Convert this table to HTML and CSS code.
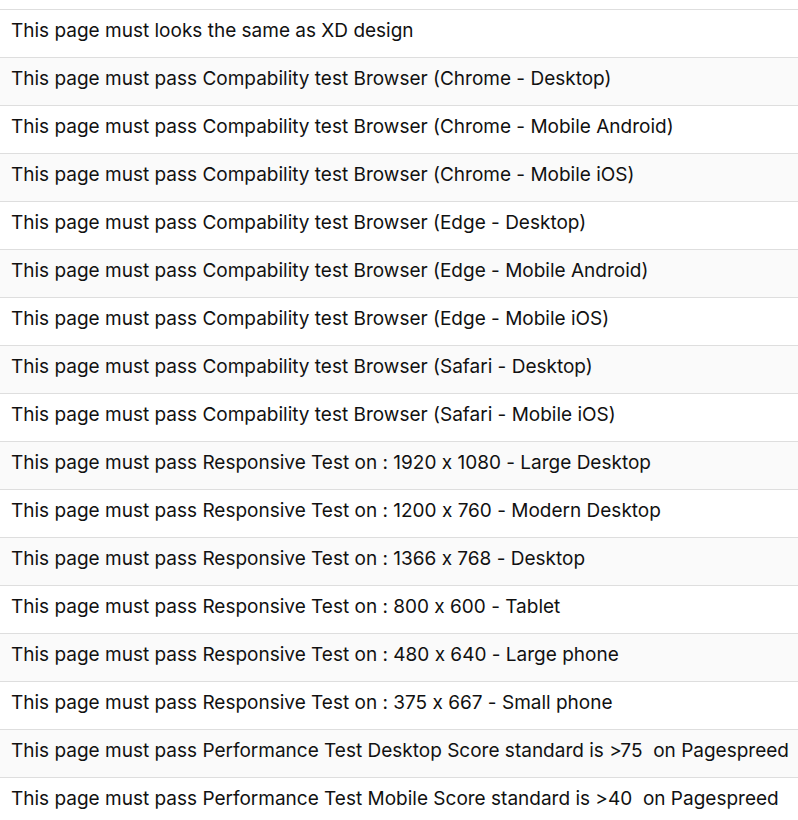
FILE: index.html
```html
<!DOCTYPE html>
<html lang="en">
<head>
  <meta charset="UTF-8">
  <meta name="viewport" content="width=device-width, initial-scale=1.0">
  <title>Checklist</title>
  <link rel="stylesheet" href="styles.css">
</head>
<body>
  <table class="checklist">
    <tbody>
      <tr><td>This page must looks the same as XD design</td></tr>
      <tr><td>This page must pass Compability test Browser (Chrome - Desktop)</td></tr>
      <tr><td>This page must pass Compability test Browser (Chrome - Mobile Android)</td></tr>
      <tr><td>This page must pass Compability test Browser (Chrome - Mobile iOS)</td></tr>
      <tr><td>This page must pass Compability test Browser (Edge - Desktop)</td></tr>
      <tr><td>This page must pass Compability test Browser (Edge - Mobile Android)</td></tr>
      <tr><td>This page must pass Compability test Browser (Edge - Mobile iOS)</td></tr>
      <tr><td>This page must pass Compability test Browser (Safari - Desktop)</td></tr>
      <tr><td>This page must pass Compability test Browser (Safari - Mobile iOS)</td></tr>
      <tr><td>This page must pass Responsive Test on : 1920 x 1080 - Large Desktop</td></tr>
      <tr><td>This page must pass Responsive Test on : 1200 x 760 - Modern Desktop</td></tr>
      <tr><td>This page must pass Responsive Test on : 1366 x 768 - Desktop</td></tr>
      <tr><td>This page must pass Responsive Test on : 800 x 600 - Tablet</td></tr>
      <tr><td>This page must pass Responsive Test on : 480 x 640 - Large phone</td></tr>
      <tr><td>This page must pass Responsive Test on : 375 x 667 - Small phone</td></tr>
      <tr><td>This page must pass Performance Test Desktop Score standard is &gt;75&nbsp; on Pagespreed</td></tr>
      <tr><td>This page must pass Performance Test Mobile Score standard is &gt;40&nbsp; on Pagespreed</td></tr>
    </tbody>
  </table>
</body>
</html>
```

FILE: styles.css
```css
body {
  margin: 0;
  padding-top: 9px;
  background: #fff;
  font-family: 'Inter', 'Roboto', sans-serif;
  font-feature-settings: "calt" 0;
  color: #111;
}

.checklist {
  width: 100%;
  border-collapse: collapse;
}

.checklist td {
  padding: 9px 11px 15px;
  font-size: 19px;
  line-height: 23px;
  border-top: 1px solid #dedede;
  white-space: nowrap;
}

.checklist tr:nth-child(even) td {
  background-color: #fafafa;
}
```
